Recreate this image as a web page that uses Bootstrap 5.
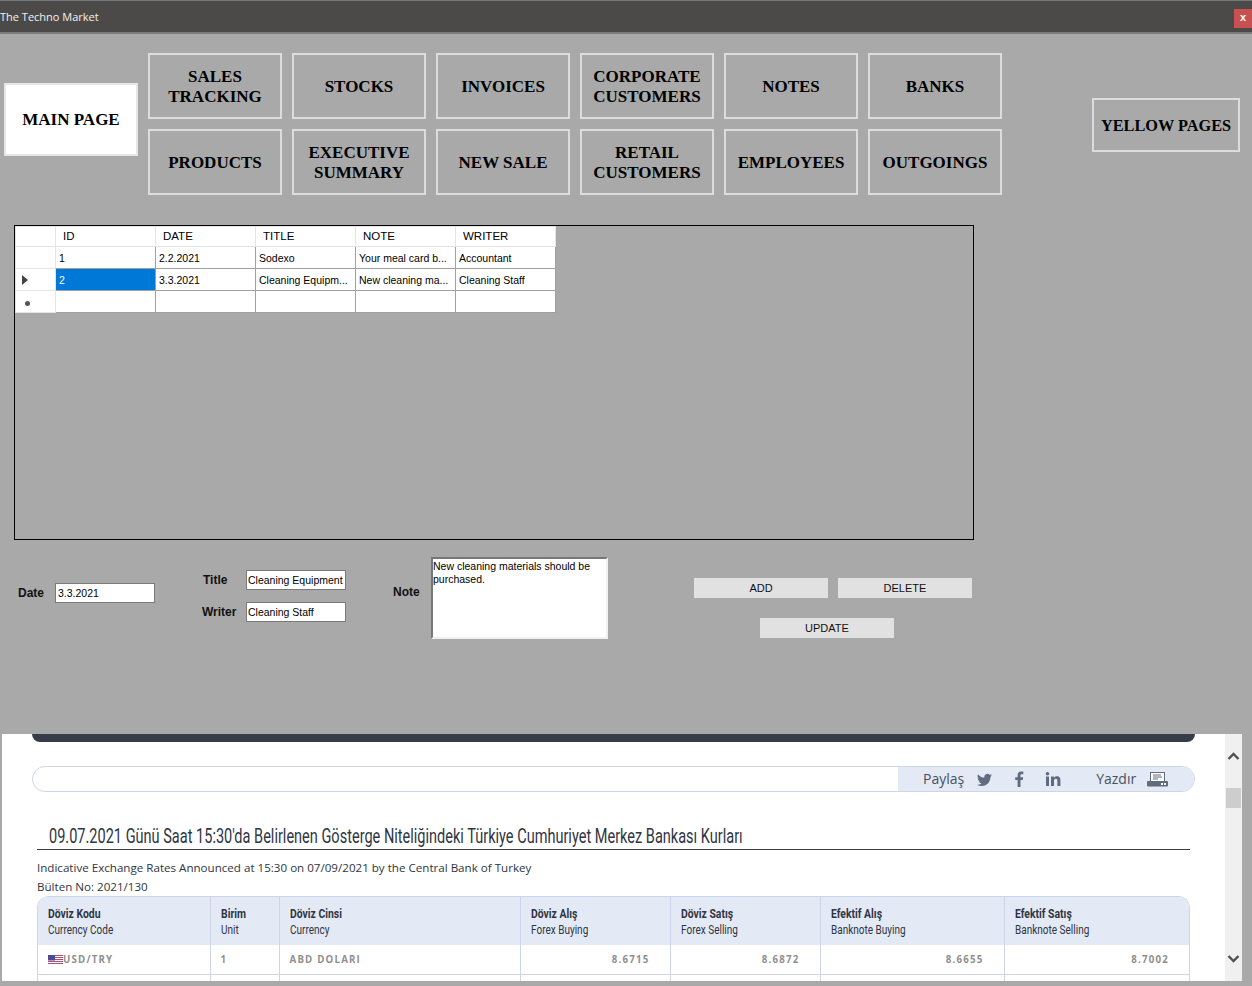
<!DOCTYPE html>
<html>
<head>
  <title>The Techno Market</title>
  <link href="https://cdn.jsdelivr.net/npm/bootstrap@5.3.0/dist/css/bootstrap.min.css" rel="stylesheet">
  <style>
    html, body { height: 986px; overflow: hidden; }
    body { background: #a9a9a9; font-family: "Liberation Sans", sans-serif; color: #000; }

    .app-titlebar { height: 34px; background: #4c4a48; border-top: 1px solid #77777f; border-bottom: 2px solid #7c7c7c; color: #f2f2f2; font: 11px "Open Sans", sans-serif; }
    .app-title { padding-top: 10px; line-height: 1; }
    .app-close { width: 18px; height: 19px; margin-top: 8px; background: #c75050; color: #fff; font: bold 11px/17px "Liberation Sans", sans-serif; text-align: center; }

    .app-main { height: 700px; }
    .menu-row { padding: 19px 12px 0 4px; }
    .menu-tile { display: flex; align-items: center; justify-content: center; text-align: center; border: 2px solid #dcdcdc; font: bold 17px/20px "Liberation Serif", serif; color: #000; background: transparent; width: 134px; height: 66px; padding: 2px 0 0; }
    .menu-tile.is-active { background: #fff; height: 73px; margin-top: 30px; margin-right: 10px; border-color: #e6e6e6; padding: 0; }
    .menu-tile.is-wide { width: 148px; height: 54px; margin-top: 45px; margin-left: 90px; white-space: nowrap; font-size: 16.3px; }
    .menu-grid { display: grid; grid-template-columns: repeat(6, 134px); gap: 10px; }

    .grid-frame { margin: 30px 0 0 14px; width: 960px; height: 315px; border: 1px solid #000; }
    .grid-table { border-collapse: collapse; background: #fff; font-size: 10.5px; table-layout: fixed; width: 541px; }
    .grid-table td, .grid-table th { height: 22px; border: 1px solid #a0a0a0; padding: 2px 3px 0; font-weight: 400; white-space: nowrap; overflow: hidden; line-height: 1; }
    .grid-table th { height: 20px; border-color: #e4e4e4; padding: 0 0 0 7px; font-size: 11.5px; }
    .grid-table tr > :first-child { width: 40px; border-color: #e4e4e4; padding: 0 3px; }
    .grid-table .cell-picked { background: #0078d7; color: #fff; }
    .row-arrow { display: block; width: 0; height: 0; margin-left: 3px; border-left: 6px solid #444; border-top: 5px solid transparent; border-bottom: 5px solid transparent; }
    .row-new { display: block; width: 5px; height: 5px; margin: 3px 0 0 6px; border-radius: 50%; background: #555; }

    .form-strip { margin-top: 17px; padding-left: 18px; }
    .form-date { margin-top: 26px; }
    .label-date { width: 37px; }
    .form-pair { gap: 12px; margin: 13px 0 0 47px; }
    .pair-row { width: 144px; }
    .label-nudge { margin-left: 1px; }
    .form-note { margin-left: 47px; }
    .label-note { width: 38px; margin-bottom: 12px; }
    .form-actions { margin: 21px 0 0 86px; }
    .action-pair { gap: 10px; }
    .action-single { margin: 20px 0 0 66px; }
    .field-label { font-size: 12px; font-weight: 700; color: #111; }
    .field-box { width: 100px; height: 20px; border: 1px solid #7a7a7a; background: #fff; font-size: 10.5px; padding: 0 2px; line-height: 18px; white-space: nowrap; overflow: hidden; }
    .field-box.is-tight { padding-left: 1px; }
    .note-box { width: 177px; height: 82px; background: #fff; border: 2px solid #f0f0f0; border-top-color: #777; border-left-color: #777; font-size: 10.5px; line-height: 13px; padding: 1px 0 0 0; }
    .flat-btn { width: 134px; height: 20px; border: 0; padding: 0; background: #e1e1e1; font-size: 11px; color: #111; line-height: 19px; }

    .web-panel { height: 247px; margin: 0 10px 0 2px; overflow: hidden; background: #fff; font-family: "Open Sans", sans-serif; }
    .web-body { width: 1223px; height: 247px; overflow: hidden; padding: 0 30px; }
    .web-scroll { width: 17px; background: #f0f0f0; }
    .scroll-up { margin-top: 18px; }
    .scroll-thumb { width: 15px; height: 20px; margin-top: 27px; background: #cdcdcd; }
    .scroll-down { margin-top: 146px; }
    .dark-strip { height: 8px; background: #363c49; border-radius: 0 0 10px 10px; }
    .share-bar { height: 26px; margin-top: 24px; border: 1px solid #cdd6e6; border-radius: 13px; overflow: hidden; }
    .share-part { width: 296px; background: #e4eaf5; color: #4a5062; font-size: 14px; }
    .share-text { margin-top: -2px; }
    .s-pay { margin-left: 25px; }
    .s-tw { margin-left: 13px; }
    .s-fb { margin-left: 19px; }
    .s-in { margin-left: 18px; }
    .s-print { margin-left: 35px; }
    .s-icon { margin-left: 11px; }
    .rates-title { margin: 31px 5px 0 5px; padding: 1px 0 0 12px; border-bottom: 1px solid #363c49; height: 27px; font: 400 20px/24px "Roboto", sans-serif; color: #2f3543; white-space: nowrap; }
    .squeezed { display: inline-block; transform-origin: left center; white-space: nowrap; }
    .rates-title .squeezed { transform: scaleX(.727); }
    .rates-note { margin: 0 0 0 5px; font-size: 11.6px; line-height: 19px; color: #2f3543; }
    .rates-title + .rates-note { margin-top: 8px; }
    .rates-wrap { margin: 0 5px 0 5px; border: 1px solid #cdd6e6; border-bottom: 0; border-radius: 12px 12px 0 0; overflow: hidden; height: 90px; }
    .rates-table { width: 100%; table-layout: fixed; border-collapse: collapse; }
    .rates-table th { height: 48px; background: #e4eaf5; padding: 2px 10px 0; font: 400 13px/16px "Roboto", sans-serif; color: #2f3543; border-left: 1px solid #cdd6e6; }
    .rates-table th .squeezed { display: block; transform: scaleX(.77); }
    .rates-table th .squeezed:first-child { font-weight: 700; transform: scaleX(.8); }
    .rates-table td { height: 29px; padding: 2px 10px 0; border-left: 1px solid #cdd6e6; border-bottom: 1px solid #cdd6e6; font-size: 9.7px; font-weight: 700; letter-spacing: 1.2px; color: #8f8f8f; }
    .rates-table tr > :first-child { border-left: 0; }
    .rates-table .num { text-align: right; padding-right: 20px; }
    .c1 { width: 172px; } .c2 { width: 69px; } .c3 { width: 241px; } .c4, .c5 { width: 150px; } .c6 { width: 184px; }
  </style>
</head>
<body>
  <div class="app-titlebar d-flex justify-content-between">
    <div class="app-title">The Techno Market</div>
    <div class="app-close">x</div>
  </div>

  <div class="app-main">
    <div class="menu-row d-flex align-items-start">
      <button class="menu-tile is-active">MAIN PAGE</button>
      <div class="menu-grid">
        <button class="menu-tile">SALES<br>TRACKING</button>
        <button class="menu-tile">STOCKS</button>
        <button class="menu-tile">INVOICES</button>
        <button class="menu-tile">CORPORATE<br>CUSTOMERS</button>
        <button class="menu-tile">NOTES</button>
        <button class="menu-tile">BANKS</button>
        <button class="menu-tile">PRODUCTS</button>
        <button class="menu-tile">EXECUTIVE<br>SUMMARY</button>
        <button class="menu-tile">NEW SALE</button>
        <button class="menu-tile">RETAIL<br>CUSTOMERS</button>
        <button class="menu-tile">EMPLOYEES</button>
        <button class="menu-tile">OUTGOINGS</button>
      </div>
      <button class="menu-tile is-wide">YELLOW PAGES</button>
    </div>

    <div class="grid-frame">
      <table class="grid-table">
        <tr><th></th><th>ID</th><th>DATE</th><th>TITLE</th><th>NOTE</th><th>WRITER</th></tr>
        <tr><td></td><td>1</td><td>2.2.2021</td><td>Sodexo</td><td>Your meal card b...</td><td>Accountant</td></tr>
        <tr><td><span class="row-arrow"></span></td><td class="cell-picked">2</td><td>3.3.2021</td><td>Cleaning Equipm...</td><td>New cleaning ma...</td><td>Cleaning Staff</td></tr>
        <tr><td><span class="row-new"></span></td><td></td><td></td><td></td><td></td><td></td></tr>
      </table>
    </div>

    <div class="form-strip d-flex align-items-start">
      <div class="d-flex align-items-center form-date">
        <span class="field-label label-date">Date</span>
        <div class="field-box">3.3.2021</div>
      </div>
      <div class="d-flex flex-column form-pair">
        <div class="d-flex align-items-center justify-content-between pair-row"><span class="field-label label-nudge">Title</span><div class="field-box is-tight">Cleaning Equipment</div></div>
        <div class="d-flex align-items-center justify-content-between pair-row"><span class="field-label">Writer</span><div class="field-box is-tight">Cleaning Staff</div></div>
      </div>
      <div class="d-flex align-items-center form-note">
        <span class="field-label label-note">Note</span>
        <div class="note-box">New cleaning materials should be purchased.</div>
      </div>
      <div class="form-actions">
        <div class="d-flex action-pair"><button class="flat-btn">ADD</button><button class="flat-btn">DELETE</button></div>
        <div class="d-flex action-single"><button class="flat-btn">UPDATE</button></div>
      </div>
    </div>
  </div>

  <div class="web-panel d-flex">
    <div class="web-body">
      <div class="dark-strip"></div>
      <div class="share-bar d-flex justify-content-end">
        <div class="share-part d-flex align-items-center">
          <span class="share-text s-pay">Paylaş</span>
          <svg class="s-tw" width="15" height="15" viewBox="0 0 16 16" fill="#5f6b7e"><path d="M5.026 15c6.038 0 9.341-5.003 9.341-9.334 0-.14 0-.282-.006-.422A6.685 6.685 0 0 0 16 3.542a6.658 6.658 0 0 1-1.889.518 3.301 3.301 0 0 0 1.447-1.817 6.533 6.533 0 0 1-2.087.793A3.286 3.286 0 0 0 7.875 6.03a9.325 9.325 0 0 1-6.767-3.429 3.289 3.289 0 0 0 1.018 4.382A3.323 3.323 0 0 1 .64 6.575v.045a3.288 3.288 0 0 0 2.632 3.218 3.203 3.203 0 0 1-.865.115 3.23 3.23 0 0 1-.614-.057 3.283 3.283 0 0 0 3.067 2.277A6.588 6.588 0 0 1 .78 13.58a6.32 6.32 0 0 1-.78-.045A9.344 9.344 0 0 0 5.026 15z"/></svg>
          <svg class="s-fb" width="16" height="16" viewBox="0 0 16 16" fill="#5f6b7e"><path d="M9.5 16V9h2.3l.4-2.8H9.5V4.5c0-.8.2-1.3 1.3-1.3h1.5V.7C12 .7 11.1.6 10.1.6 8 .6 6.6 1.9 6.6 4.2v2H4.2V9h2.4v7z"/></svg>
          <svg class="s-in" width="16" height="16" viewBox="0 0 16 16" fill="#5f6b7e"><rect x="1" y="5.5" width="3" height="9.5"/><circle cx="2.5" cy="2.8" r="1.8"/><path d="M6 5.5h2.9v1.3c.5-.9 1.6-1.6 3-1.6 2.9 0 3.5 1.9 3.5 4.4V15h-3v-4.8c0-1.2-.1-2.5-1.6-2.5s-1.8 1.2-1.8 2.4V15H6z"/></svg>
          <span class="share-text s-print">Yazdır</span>
          <svg class="s-icon" width="21" height="15" viewBox="0 0 21 15"><rect x="3.5" y=".5" width="14" height="9" fill="#fff" stroke="#5f6b7e"/><path d="M6 3h8M6 5h9M6 7h5" stroke="#5f6b7e"/><rect y="9" width="21" height="5.5" rx="1" fill="#5f6b7e"/><rect x="14" y="11" width="2" height="2" fill="#fff"/><rect x="17" y="11" width="2" height="2" fill="#fff"/></svg>
        </div>
      </div>
      <h1 class="rates-title"><span class="squeezed">09.07.2021 Günü Saat 15:30'da Belirlenen Gösterge Niteliğindeki Türkiye Cumhuriyet Merkez Bankası Kurları</span></h1>
      <p class="rates-note">Indicative Exchange Rates Announced at 15:30 on 07/09/2021 by the Central Bank of Turkey</p>
      <p class="rates-note">Bülten No: 2021/130</p>
      <div class="rates-wrap">
        <table class="rates-table">
          <colgroup><col class="c1"><col class="c2"><col class="c3"><col class="c4"><col class="c5"><col class="c6"><col></colgroup>
          <tr>
            <th><span class="squeezed">Döviz Kodu</span><span class="squeezed">Currency Code</span></th>
            <th><span class="squeezed">Birim</span><span class="squeezed">Unit</span></th>
            <th><span class="squeezed">Döviz Cinsi</span><span class="squeezed">Currency</span></th>
            <th><span class="squeezed">Döviz Alış</span><span class="squeezed">Forex Buying</span></th>
            <th><span class="squeezed">Döviz Satış</span><span class="squeezed">Forex Selling</span></th>
            <th><span class="squeezed">Efektif Alış</span><span class="squeezed">Banknote Buying</span></th>
            <th><span class="squeezed">Efektif Satış</span><span class="squeezed">Banknote Selling</span></th>
          </tr>
          <tr>
            <td><svg class="align-middle" width="15" height="10" viewBox="0 0 15 10"><rect width="15" height="10" fill="#fff"/><path d="M0 .5h15M0 2.5h15M0 4.5h15M0 6.5h15M0 8.5h15" stroke="#a9506e"/><rect width="7" height="5.5" fill="#4b4b93"/></svg>USD/TRY</td><td>1</td><td>ABD DOLARI</td><td class="num">8.6715</td><td class="num">8.6872</td><td class="num">8.6655</td><td class="num">8.7002</td>
          </tr>
          <tr><td></td><td></td><td></td><td></td><td></td><td></td><td></td></tr>
        </table>
      </div>
    </div>
    <div class="web-scroll d-flex flex-column align-items-center">
      <svg class="scroll-up" width="13" height="9" viewBox="0 0 13 9"><path d="M1.5 7 6.5 2l5 5" fill="none" stroke="#505050" stroke-width="2.4"/></svg>
      <div class="scroll-thumb"></div>
      <svg class="scroll-down" width="13" height="9" viewBox="0 0 13 9"><path d="M1.5 2l5 5 5-5" fill="none" stroke="#505050" stroke-width="2.4"/></svg>
    </div>
  </div>
</body>
</html>
